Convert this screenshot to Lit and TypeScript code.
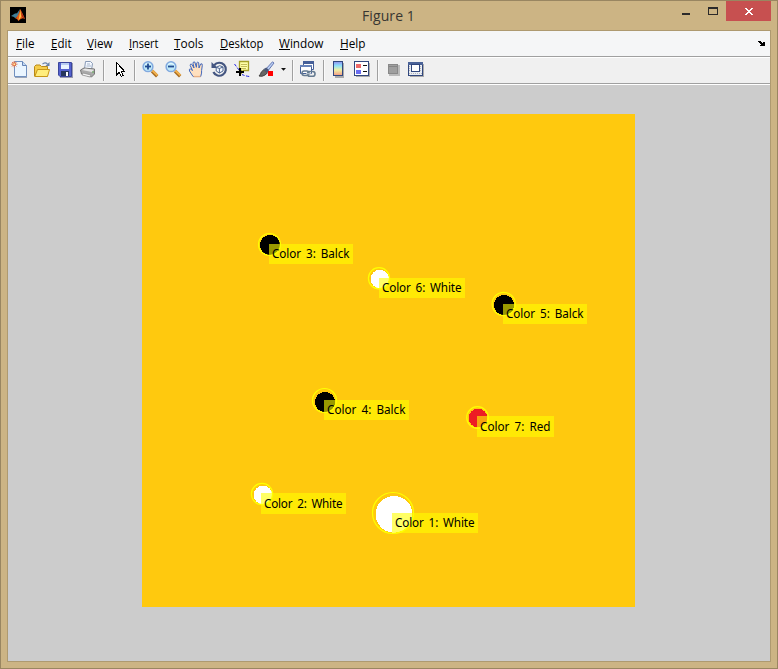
import { LitElement, html, svg, css } from "lit";
import { customElement } from "lit/decorators.js";

const menus = ["File", "Edit", "View", "Insert", "Tools", "Desktop", "Window", "Help"];
const menuWidths = [18.5, 20.5, 25.5, 29.5, 29.5, 43.5, 44.5, 25.5];

const lens = (plus: boolean) => svg`
  <path d="M10 10L15.2 15.2" stroke="#a86d24" stroke-width="3.4"/>
  <path d="M10.3 9.5L15.4 14.4" stroke="#f3b24d" stroke-width="2"/>
  <circle cx="6" cy="5.7" r="4.9" fill="#bfeaf8" stroke="#82a9df" stroke-width="1.5"/>
  <path d="M3 3.5Q6 .8 9 3.6" fill="none" stroke="#e8fbff"/>
  <path d="M3 5.5H9" stroke="#234b91" stroke-width="1.8"/>
  ${plus ? svg`<path d="M6 2.5V8.5" stroke="#234b91" stroke-width="1.8"/>` : ""}`;

const icons: Record<string, unknown> = {
  new: svg`
    <path d="M4 2H12L16 6V17H4Z" fill="#9aa5b8"/>
    <path d="M3.5 .5H11.5L15.5 4.5V15.5H3.5Z" fill="#eaf5ff" stroke="#7190bf"/>
    <path d="M11.5 .5V4.5H15.5" fill="#c3d9f3" stroke="#6684b6"/>
    <path d="M1 1L5.5 5.5M5.5 1L1 5.5M3.2 0V6.5M0 3.2H6.5" stroke="#dc7650" stroke-width=".9"/>
    <rect x="2" y="2" width="2.5" height="2.5" fill="#fff0a3" stroke="#e46a43" stroke-width=".8"/>`,
  open: svg`
    <path d="M.5 15V5.5L2 4H6L7.5 5.5H13.5V15Z" fill="#f5cc49" stroke="#b88918"/>
    <path d="M.8 15.5L3.5 8.5H15.5L13.5 15.5Z" fill="#ffed7d" stroke="#c79617"/>
    <path d="M8.5 3.2Q11 .5 13.5 3" fill="none" stroke="#6781a8" stroke-width="1.2"/>
    <path d="M15.5 1V5H11.5Z" fill="#6781a8"/>`,
  save: svg`
    <path d="M2 2H16V17H3Z" fill="#999bb0"/>
    <path d="M1.5 1.5H14.5V15.5H3L1.5 14Z" fill="#5562cf" stroke="#3b469d"/>
    <path d="M4 2H12V8H4Z" fill="#eaf4ff"/><path d="M4 2H12V4H4Z" fill="#b8cdf2"/>
    <path d="M4 10H12V15H4Z" fill="#27375d"/><path d="M9 11H11V15H9Z" fill="#fff"/>`,
  print: svg`
    <path d="M4.5 8L5.5 .5H10.5L12.5 2.5L11.5 9Z" fill="#f3f8ff" stroke="#8799b5"/>
    <path d="M7 3H10M6.5 5H11" stroke="#a6b5ca"/>
    <path d="M.5 9L4 7L14.5 8V13L11.5 16L1.5 13Z" fill="#aaa" stroke="#777"/>
    <path d="M2 9L5 7.5L14 8.7L12 11Z" fill="#e5e5e5"/>
    <path d="M3 12L11 14L10 16L2 14Z" fill="#f6f6f6" stroke="#888" stroke-width=".7"/>
    <path d="M12 11H14" stroke="#63b058"/>`,
  pointer: svg`
    <path d="M4.5 1.5V14L7.2 11.4L9.3 15.5L11.3 14.5L9.4 10.5H12.7Z" fill="#fff" stroke="#000" shape-rendering="crispEdges"/>`,
  zoomIn: lens(true),
  zoomOut: lens(false),
  pan: svg`
    <path d="M5 15.5L1.5 10Q.8 7.5 2.5 8L4.5 9.5L2.2 4.5Q2 2.5 3.8 3.2L6 7L5 2.2Q5 .5 6.8 1L8.4 6.3L8.8 1.8Q9.8 .1 10.7 1.9L11 7L12.6 3Q14.5 2 14.3 4.3L13.6 9.5Q14 11.7 12.7 15.5Z" fill="#ffe0bf" stroke="#4268bd"/>
    <path d="M5.5 15.6H12.5" stroke="#eab185" stroke-width="1.4"/>`,
  rotate: svg`
    <path d="M3.2 4.2A6.5 6.5 0 1 1 2.4 11" fill="none" stroke="#445681" stroke-width="2.2"/>
    <path d="M.5 1V7H6.7Z" fill="#445681"/>
    <path d="M5.2 6.3L8.8 4.7L12 6V10L8.4 12L5.2 10ZM5.2 6.3L8.4 7.5L12 6M8.4 7.5V12" fill="#f8faff" stroke="#4b6490"/>`,
  cursor: svg`
    <path d="M.5 3L5 9M8 13.5Q11 15 15.5 15.5" fill="none" stroke="#2424e4" stroke-dasharray="3 1.5"/>
    <path d="M5.5 .5H14.5V9.5H9.5L7.5 12V9.5H5.5Z" fill="#ffffa9" stroke="#a6a029" stroke-width="1.3"/>
    <path d="M7 3.5H13M7 5.5H13M7 7.5H12" stroke="#c5bc5a"/>
    <path d="M6 7V15M2 11H10" stroke="#000" stroke-width="2"/>`,
  brush: svg`
    <path d="M7 9L14.5 .8L16 2L9 11Z" fill="#b8cdf2" stroke="#6678b2"/>
    <path d="M6 8.5L9.5 11.8L7 14Q4.2 16 1 15Q3 13 3.3 11Z" fill="#666" stroke="#444"/>
    <path d="M5.7 8L8.3 6.4L11 9L9.2 11.6Z" fill="#4c5879"/>
    <path d="M10 10H15V15H10Z" fill="#f00"/>`,
  caret: svg`<path d="M0 7H5L2.5 9.7Z" fill="#111"/>`,
  link: svg`
    <path d="M4.5 .5H14.5V8.5H4.5Z" fill="#fff" stroke="#455f98"/><path d="M4 0H15V3H4Z" fill="#455f98"/>
    <path d="M1.5 4.5H12.5V12.5H1.5Z" fill="#fff" stroke="#455f98"/><path d="M1 4H13V6H1Z" fill="#6783ba"/>
    <g fill="none" stroke="#657b91" stroke-width="1.6"><rect x="3" y="10" width="7" height="4.5" rx="2.2"/><rect x="8.5" y="10.5" width="7.5" height="4.8" rx="2.3"/></g>
    <path d="M7 12.7H12" stroke="#bfcbd6"/>`,
  colorbar: svg`
    <path d="M5 2H14V17H5Z" fill="#aaa"/>
    <rect x="3.5" y=".5" width="9" height="14" fill="url(#spectrum)" stroke="#31477e"/>
    <defs><linearGradient id="spectrum" x2="0" y2="1"><stop stop-color="#9190ef"/><stop offset=".3" stop-color="#8de2fa"/><stop offset=".6" stop-color="#eff1a3"/><stop offset="1" stop-color="#f49984"/></linearGradient></defs>`,
  legend: svg`
    <path d="M2 2H16V16H2Z" fill="#aaa"/>
    <rect x=".5" y=".5" width="14" height="14" fill="#fff" stroke="#31477e"/>
    <path d="M2 3H7V7H2Z" fill="#ee6969"/><path d="M2 9H7V13H2Z" fill="#696cf0"/>
    <path d="M9 4.5H13M9 10.5H13" stroke="#111"/>`,
  hide: svg`
    <path d="M4 4H15V15H4Z" fill="#bbb"/><rect x="3.5" y="3.5" width="9" height="9" fill="#9f9f9f" stroke="#898989"/>
    <path d="M4 5.5H12" stroke="#858585"/>`,
  show: svg`
    <path d="M2 3H16V16H2Z" fill="#aaa"/>
    <rect x=".5" y="1.5" width="14" height="13" fill="#e8edf3" stroke="#31477e"/>
    <path d="M0 1H15V4H0Z" fill="#4b6398"/>
    <path d="M1 5.5H3M1 7.5H3M1 9.5H3M12 5.5H14M12 7.5H14M12 9.5H14M1 12.5H14" stroke="#b4b4bc" stroke-dasharray="1 1"/>
    <rect x="3.5" y="3.5" width="8" height="7" fill="#fff" stroke="#31477e"/>`,
};

const tools = ["new", "open", "save", "print", "|", "pointer", "|", "zoomIn", "zoomOut", "pan", "rotate",
  "cursor", "brush", "caret", "|", "link", "|", "colorbar", "legend", "|", "hide", "show"];

interface Blob {
  text: string; fill: string;
  disc: [number, number, number];
  ring: [number, number, number];
  box: [number, number, number, number];
}

// Coordinates are relative to the axes area's top-left corner.
const blobs: Blob[] = [
  { text: "Color 3: Balck", fill: "#000", disc: [128, 131, 10.1], ring: [127.5, 130.5, 11], box: [127, 130, 84, 20] },
  { text: "Color 6: White", fill: "#fff", disc: [237.8, 165, 9.2], ring: [237, 164.3, 10.6], box: [237, 164, 86, 20] },
  { text: "Color 5: Balck", fill: "#000", disc: [362, 191, 10.1], ring: [361.7, 190, 11.6], box: [361, 190, 84, 20] },
  { text: "Color 4: Balck", fill: "#000", disc: [183, 288, 10.1], ring: [182.5, 286.5, 12], box: [182, 286, 85, 20] },
  { text: "Color 7: Red", fill: "#ed1c24", disc: [336, 304, 9.4], ring: [335.5, 303.5, 10.8], box: [335, 302, 77, 21] },
  { text: "Color 2: White", fill: "#fff", disc: [121, 381, 9.4], ring: [120, 380, 10.6], box: [119, 379, 85, 21] },
  { text: "Color 1: White", fill: "#fff", disc: [252, 400.3, 18.4], ring: [251, 399, 20.5], box: [250, 399, 86, 20] },
];

@customElement("app-root")
export class AppRoot extends LitElement {
  static styles = css`
    :host { display: block; font-family: "Open Sans", "Noto Sans", sans-serif; }
    .window { box-sizing: border-box; width: 778px; height: 669px; display: flex; flex-direction: column;
      background: #ccb484; border: 1px solid #998661; padding: 0 6px 6px; }
    .title { height: 29px; flex: none; display: grid; grid-template-columns: 84px 1fr 84px; }
    .logo { width: 16px; height: 16px; margin: 6px 0 0 3px; }
    .name { text-align: center; font-size: 14px; line-height: 19px; padding: 5px 1px 0 0; color: #383632; letter-spacing: .1px; }
    .controls { display: block; width: 97px; height: 29px; margin-left: -13px; }
    .frame { flex: 1; display: flex; flex-direction: column; border: 1px solid #ae9a70; background: #ccc; }
    .menu { flex: none; height: 25px; background: #f5f6f7; display: flex; align-items: center; gap: 16px;
      padding-left: 8px; border-bottom: 1px solid #a0a0a0; }
    .menu svg { height: 25px; overflow: visible; display: block; }
    .menu .dock { margin-left: auto; margin-right: 4px; width: 9px; }
    text { font-size: 12px; fill: #000; white-space: pre; }
    .tools { flex: none; height: 25px; background: #f0f0f0; border-top: 1px solid #fff; border-bottom: 1px solid #a0a0a0;
      padding-left: 3px; display: grid;
      grid-template-columns: 23px 23px 23px 23px 9px 22px 8px 23px 23px 23px 23px 24px 23px 11px 7px 24px 7px 24px 23px 8px 23px 17px; }
    .tools svg { width: 18px; height: 18px; margin-top: 3px; overflow: visible; }
    .sep { width: 1px; height: 21px; background: #a0a0a0; margin-top: 2px; border-right: 1px solid #fafafa; }
    .canvas { flex: 1; border-top: 1px solid #fff; padding: 29px 0 0 134px; }
    .axes { display: block; width: 493px; height: 493px; background: #ffc90e; }
    .axes text { font-family: "Noto Sans", sans-serif; font-size: 11.7px; word-spacing: 2px; }
  `;

  render() {
    return html`
      <div class="window">
        <div class="title">
          <svg class="logo" viewBox="0 0 16 16">
            <path d="M0 0H16V16H0Z" fill="#000"/>
            <path d="M1 9L5 6.5L7 6.2L10 2L8.3 9L5.2 11.3L4 10Z" fill="#417e98"/>
            <path d="M5.2 11.3Q8 10 10.2 2Q12 5 15 12Q12 9.6 8.4 14Q7.3 11.4 5.2 11.3Z" fill="#e55b16"/>
            <path d="M8.4 13.5Q9.5 9 10.3 3L11.2 9.8Z" fill="#ffc443"/>
            <path d="M10.8 4L14.8 12L12.2 10Z" fill="#a62816"/>
          </svg>
          <div class="name">Figure 1</div>
          <svg class="controls" viewBox="0 0 97 29" shape-rendering="crispEdges">
            <path d="M8 12H16V14H8Z" fill="#2b2a2a"/>
            <path d="M34 6H44V14H34ZM35 8V13H43V8Z" fill="#2b2a2a" fill-rule="evenodd"/>
            <path d="M52 0H97V20H52Z" fill="#c75050"/>
            <path d="M71 7H73V8H74V9H76V8H77V7H79V8H78V9H77V10H76V11H77V12H78V13H79V14H77V13H76V12H74V13H73V14H71V13H72V12H73V11H74V10H73V9H72V8H71Z" fill="#fff"/>
          </svg>
        </div>
        <div class="frame">
          <div class="menu">
            ${menus.map((m, i) => html`<svg width=${menuWidths[i]} height="25">
              <text x="0" y="17" textLength=${menuWidths[i]} lengthAdjust="spacingAndGlyphs">${m}</text>
              <path d="M0 18.5H${m[0] === "W" ? 11 : m[0] === "D" || m[0] === "H" ? 8 : m[0] === "I" ? 3 : 6}" stroke="#000" shape-rendering="crispEdges"/>
            </svg>`)}
            <svg class="dock" viewBox="0 0 9 25" shape-rendering="crispEdges">
              <path d="M1 10H4V11H5V12H6V11H8V15H3V14H4V13H3V12H2V11H1Z" fill="#000"/>
            </svg>
          </div>
          <div class="tools">
            ${tools.map((t) => t === "|" ? html`<div class="sep"></div>`
              : html`<svg viewBox="0 0 18 18">${icons[t]}</svg>`)}
          </div>
          <div class="canvas">
            <svg class="axes" viewBox="0 0 493 493">
              ${blobs.map((b) => svg`
                <circle cx=${b.disc[0]} cy=${b.disc[1]} r=${b.disc[2]} fill=${b.fill} shape-rendering="crispEdges"/>
                <circle cx=${b.ring[0]} cy=${b.ring[1]} r=${b.ring[2]} fill="none" stroke="#ff0" stroke-width="1.2"/>
                <rect x=${b.box[0]} y=${b.box[1]} width=${b.box[2]} height=${b.box[3]} fill="#ff0" fill-opacity=".6"/>
                <text x=${b.box[0] + 3} y=${b.box[1] + b.box[3] - 6} textLength=${b.box[2] - 6.5} lengthAdjust="spacing">${b.text}</text>`)}
            </svg>
          </div>
        </div>
      </div>`;
  }
}
